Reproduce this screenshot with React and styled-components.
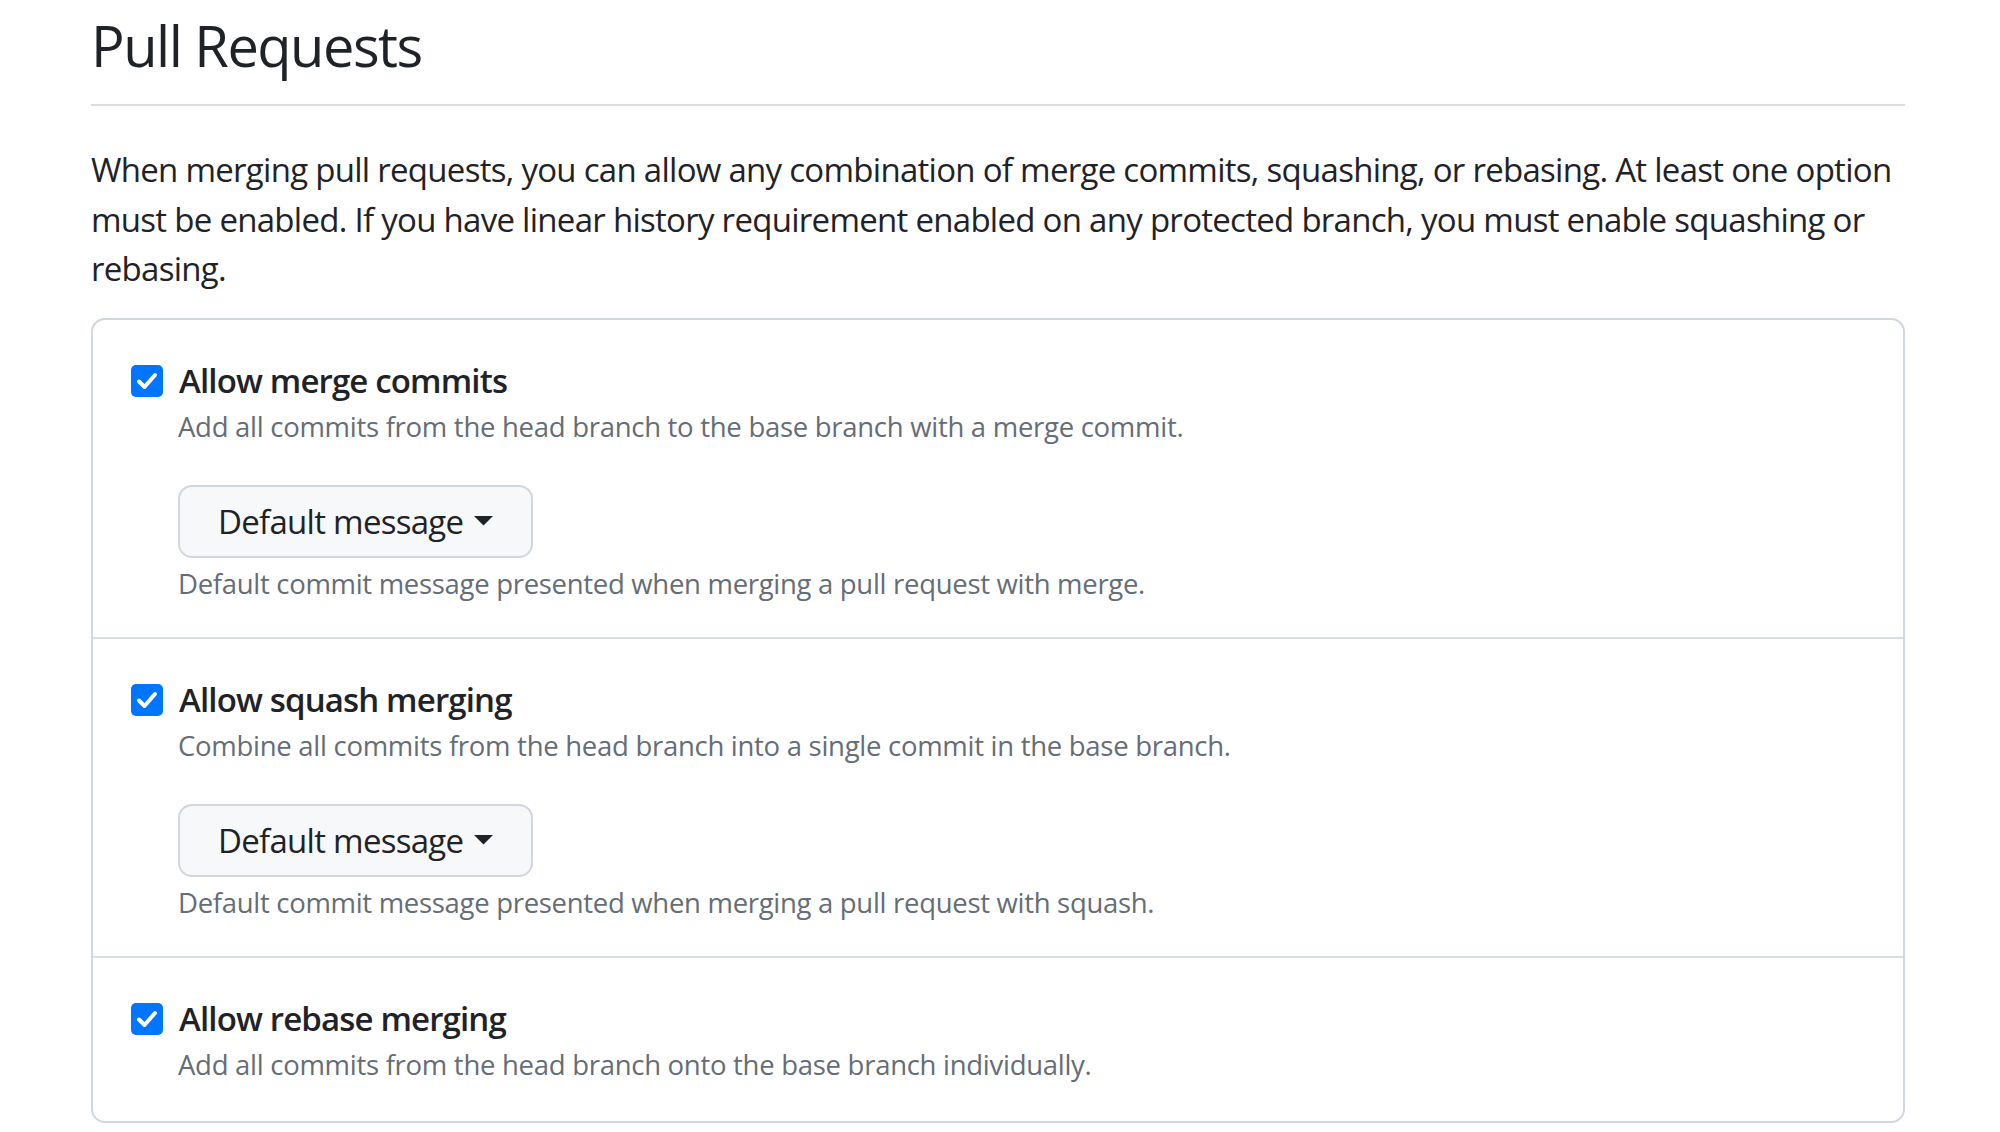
import React from 'react';
import styled, { createGlobalStyle } from 'styled-components';

const GlobalStyle = createGlobalStyle`
  body {
    margin: 0;
    background: #ffffff;
    color: #1f2328;
    font-family: 'Open Sans', 'Noto Sans', sans-serif;
  }
`;

const Page = styled.div`
  padding: 9px 95px 0 91px;
`;

const Subhead = styled.div`
  padding-bottom: 23px;
  margin-bottom: 39px;
  border-bottom: 2px solid #d8dee4;
`;

const Heading = styled.h2`
  margin: 0;
  font-size: 56px;
  font-weight: 400;
  line-height: 72px;
  letter-spacing: -1.5px;
`;

const Intro = styled.p`
  margin: 0 0 24px;
  font-size: 33px;
  line-height: 49.5px;
  letter-spacing: -0.72px;
`;

const Box = styled.div`
  border: 2px solid #d0d7de;
  border-radius: 14px;
`;

const Row = styled.div`
  padding: ${(p) => (p.last ? '36px 38px 36px' : '36px 38px 33px')};
  border-top: ${(p) => (p.first ? 'none' : '2px solid #d8dee4')};
`;

const CheckLabel = styled.label`
  display: flex;
  align-items: center;
  gap: 16px;
  font-size: 33px;
  font-weight: 600;
  line-height: 50px;
  letter-spacing: -0.85px;
`;

const CheckBox = styled.span`
  display: flex;
  align-items: center;
  justify-content: center;
  width: 32px;
  height: 32px;
  flex-shrink: 0;
  border-radius: 5px;
  background: #0075ff;
`;

const Note = styled.p`
  margin: 0;
  padding-left: 47px;
  font-size: 27.5px;
  line-height: 41px;
  letter-spacing: -0.28px;
  color: #656d76;
`;

const Options = styled.div`
  margin-top: 38px;
  padding-left: 47px;
`;

const MenuButton = styled.button`
  display: inline-flex;
  align-items: center;
  gap: 11px;
  height: 73px;
  padding: 0 38px;
  background: #f6f8fa;
  border: 2px solid #d0d7de;
  border-radius: 14px;
  color: #1f2328;
  font-family: inherit;
  font-size: 33px;
  font-weight: 500;
  letter-spacing: -0.72px;
`;

const ButtonNote = styled.p`
  margin: 5px 0 0;
  font-size: 27.5px;
  line-height: 41px;
  letter-spacing: -0.3px;
  color: #656d76;
`;

const Check = () => (
  <CheckBox>
    <svg width="24" height="24" viewBox="0 0 24 24">
      <path d="M4 12.5 L9.5 18 L20 6" fill="none" stroke="#fff" strokeWidth="4" strokeLinecap="round" strokeLinejoin="round" />
    </svg>
  </CheckBox>
);

const Caret = () => (
  <svg width="19" height="10" viewBox="0 0 19 10">
    <path d="M0 0 H19 L9.5 9.5 Z" fill="#1f2328" />
  </svg>
);

const options = [
  {
    title: 'Allow merge commits',
    desc: 'Add all commits from the head branch to the base branch with a merge commit.',
    note: 'Default commit message presented when merging a pull request with merge.',
  },
  {
    title: 'Allow squash merging',
    desc: 'Combine all commits from the head branch into a single commit in the base branch.',
    note: 'Default commit message presented when merging a pull request with squash.',
  },
  {
    title: 'Allow rebase merging',
    desc: 'Add all commits from the head branch onto the base branch individually.',
  },
];

const App = () => {
  return (
    <Page>
      <GlobalStyle />
      <Subhead>
        <Heading>Pull Requests</Heading>
      </Subhead>
      <Intro>
        When merging pull requests, you can allow any combination of merge commits, squashing, or
        rebasing. At least one option must be enabled. If you have linear history requirement
        enabled on any protected branch, you must enable squashing or rebasing.
      </Intro>
      <Box>
        {options.map((item, idx) => (
          <Row key={idx} first={idx === 0} last={idx === options.length - 1}>
            <CheckLabel>
              <Check />
              {item.title}
            </CheckLabel>
            <Note>{item.desc}</Note>
            {item.note && (
              <Options>
                <MenuButton>
                  Default message
                  <Caret />
                </MenuButton>
                <ButtonNote>{item.note}</ButtonNote>
              </Options>
            )}
          </Row>
        ))}
      </Box>
    </Page>
  );
};

export default App;
